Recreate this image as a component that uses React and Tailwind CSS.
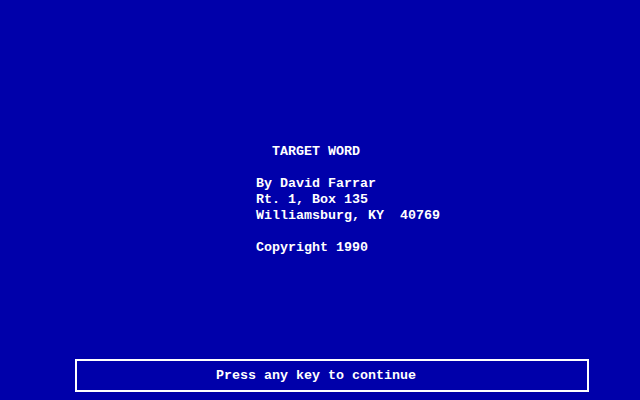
export default function App() {
  const lines = [
    "  TARGET WORD",
    "",
    "By David Farrar",
    "Rt. 1, Box 135",
    "Williamsburg, KY  40769",
    "",
    "Copyright 1990",
  ];

  return (
    <div
      className="w-[640px] h-[400px] bg-[#0000aa] text-white flex flex-col overflow-hidden"
      style={{ fontFamily: '"Liberation Mono", "DejaVu Sans Mono", monospace' }}
    >
      <div className="pt-[144px] pl-[256px] text-[13.33px] leading-[16px] font-bold whitespace-pre">
        {lines.map((l, i) => (
          <div key={i} className="h-[16px]">
            {l}
          </div>
        ))}
      </div>
      <div className="mt-[103px] ml-[75px] w-[514px] h-[33px] border-2 border-white flex items-center">
        <div className="pl-[139px] text-[13.33px] leading-[16px] font-bold whitespace-pre">
          Press any key to continue
        </div>
      </div>
    </div>
  );
}
